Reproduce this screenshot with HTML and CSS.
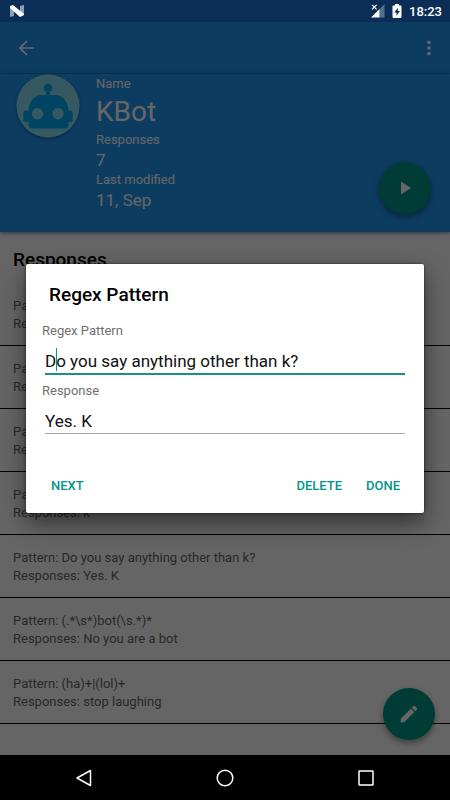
FILE: index.html
```html
<!DOCTYPE html>
<html lang="en">
<head>
<meta charset="utf-8">
<meta name="viewport" content="width=device-width, initial-scale=1">
<title>KBot</title>
<link rel="stylesheet" href="styles.css">
</head>
<body>
<div class="screen">
  <div class="status">
    <svg class="status-logo" width="16" height="12" viewBox="0 0 16 12" aria-hidden="true">
      <path d="M1 1h4v10l-4 1zM11 1l4-1v10l-4 1z" fill="#8d9db3"/>
      <path d="M1 1l3-1 11 9v1l-4 2L1 3z" fill="#fff"/>
    </svg>
    <div class="status-right">
      <svg width="14" height="14" viewBox="0 0 14 14" aria-hidden="true">
        <path d="M13.500 0v13.500H8.500V5z" fill="#54708f"/>
        <path d="M8.500 5v8.500H0z" fill="#fff"/>
        <path d="M1 .8l4.600 4.600M5.600 .8L1 5.400" stroke="#fff" stroke-width="1.200"/>
      </svg>
      <svg width="10" height="14" viewBox="0 0 10 14" aria-hidden="true">
        <path d="M3 0h4v1.500h1.500q1 0 1 1v10.500q0 1-1 1h-7q-1 0-1-1V2.500q0-1 1-1H3z" fill="#fff"/>
        <path d="M5.800 3.800L2.300 8.500h2.200v3.200L7.900 7H5.800z" fill="#0a2e55"/>
      </svg>
      <span class="clock">18:23</span>
    </div>
  </div>

  <div class="app">
    <header class="toolbar">
      <button class="icon-btn" aria-label="Back">
        <svg width="16" height="16" viewBox="0 0 16 16"><path d="M15 8H1.500M8 1L1 8l7 7" fill="none" stroke="currentColor" stroke-width="1.600"/></svg>
      </button>
      <button class="icon-btn" aria-label="More options">
        <svg width="4" height="16" viewBox="0 0 4 16"><g fill="currentColor"><circle cx="2" cy="2.500" r="1.800"/><circle cx="2" cy="8" r="1.800"/><circle cx="2" cy="13.500" r="1.800"/></g></svg>
      </button>
    </header>
    <section class="profile">
      <svg class="avatar" width="64" height="64" viewBox="0 0 64 64" aria-hidden="true">
        <circle cx="32" cy="32" r="31.500" fill="#84dcf2"/>
        <g fill="#03a9f4">
          <circle cx="32" cy="14" r="4.400"/>
          <path d="M30.300 16h3.400v6h-3.400z"/>
          <path d="M12.500 38C12.500 28 18 21 26 21h13c8 0 13.500 7 13.500 17z"/>
          <rect x="7.300" y="36.500" width="49.400" height="11.500" rx="2.500"/>
          <path d="M12.500 38h40v12.500q0 4-4 4h-32q-4 0-4-4z"/>
        </g>
        <g fill="#84dcf2"><circle cx="21.500" cy="39.700" r="5.700"/><circle cx="42" cy="39.700" r="5.700"/></g>
      </svg>
      <dl class="facts">
        <dt>Name</dt><dd class="name">KBot</dd>
        <dt>Responses</dt><dd>7</dd>
        <dt>Last modified</dt><dd>11, Sep</dd>
      </dl>
      <button class="fab fab-play" aria-label="Play">
        <svg width="12" height="14" viewBox="0 0 12 14"><path d="M2 .5l10 6.500-10 6.500z" fill="currentColor"/></svg>
      </button>
    </section>
    <main class="responses">
      <h1>Responses</h1>
      <ul>
        <li>Pattern: (hi)+<br>Responses: k</li>
        <li>Pattern: (hey)+<br>Responses: k</li>
        <li>Pattern: (yo)+<br>Responses: k</li>
        <li>Pattern: (.*)<br>Responses: k</li>
        <li>Pattern: Do you say anything other than k?<br>Responses: Yes. K</li>
        <li>Pattern: (.*\s*)bot(\s.*)*<br>Responses: No you are a bot</li>
        <li>Pattern: (ha)+|(lol)+<br>Responses: stop laughing</li>
      </ul>
    </main>
    <button class="fab fab-edit" aria-label="Edit">
      <svg width="22" height="22" viewBox="0 0 24 24"><path d="M3 17.250V21h3.750L17.810 9.940l-3.750-3.750zM20.710 7.040a1 1 0 0 0 0-1.410l-2.340-2.340a1 1 0 0 0-1.410 0l-1.830 1.830 3.750 3.750z" fill="currentColor"/></svg>
    </button>

    <div class="scrim">
      <form class="dialog" role="dialog" aria-labelledby="dialog-title">
        <h2 id="dialog-title">Regex Pattern</h2>
        <label for="pattern">Regex Pattern</label>
        <div class="field active">
          <input id="pattern" type="text" value="Do you say anything other than k?">
          <span class="caret"></span>
        </div>
        <label for="response">Response</label>
        <div class="field">
          <input id="response" type="text" value="Yes. K">
        </div>
        <div class="actions">
          <button type="button">NEXT</button>
          <button type="button" class="push">DELETE</button>
          <button type="button">DONE</button>
        </div>
      </form>
    </div>
  </div>

  <nav class="navbar">
    <button aria-label="Back"><svg width="18" height="18" viewBox="0 0 18 18"><path d="M15.500 1.500v15L2 9z"/></svg></button>
    <button aria-label="Home"><svg width="18" height="18" viewBox="0 0 18 18"><circle cx="9" cy="9" r="7.800"/></svg></button>
    <button aria-label="Overview"><svg width="18" height="18" viewBox="0 0 18 18"><rect x="2" y="2" width="14" height="14" rx=".5"/></svg></button>
  </nav>
</div>
</body>
</html>
```
FILE: styles.css
```css
* { box-sizing: border-box; }

body {
  margin: 0;
  font-family: Roboto, "Liberation Sans", sans-serif;
}

button {
  border: 0;
  padding: 0;
  background: none;
  font: inherit;
  color: inherit;
}

svg { display: block; }

.screen {
  display: flex;
  flex-direction: column;
  height: 100vh;
}

.status {
  display: flex;
  align-items: center;
  justify-content: space-between;
  height: 22px;
  padding: 0 8px 0 9px;
  background: #0a2e55;
  color: #fff;
}

.status-right {
  display: flex;
  align-items: center;
  gap: 7px;
}

.clock {
  font-size: 13px;
  font-weight: 500;
}

.app {
  position: relative;
  flex: 1;
  overflow: hidden;
  background: #fcfcfc;
}

.toolbar {
  display: flex;
  align-items: center;
  justify-content: space-between;
  height: 52px;
  padding: 0 19px;
  background: #2196f3;
  border-bottom: 1px solid #1d8ae2;
  color: #fff;
}

.profile {
  position: relative;
  display: flex;
  align-items: flex-start;
  gap: 16px;
  height: 158px;
  padding: 0 16px;
  background: #2196f3;
  box-shadow: 0 1px 4px rgba(0, 0, 0, .5);
  color: #fff;
}

.avatar {
  border-radius: 50%;
  box-shadow: 0 1px 2px rgba(0, 0, 0, .4);
}

.facts { margin: 0; }

.facts dt {
  font-size: 13px;
  line-height: 20px;
}

.facts dd {
  margin: 0;
  font-size: 17px;
  line-height: 20px;
}

.facts .name {
  font-size: 28px;
  line-height: 36px;
}

.fab {
  position: absolute;
  display: grid;
  place-items: center;
  width: 52px;
  height: 52px;
  border-radius: 50%;
  background: #009688;
  box-shadow: 0 3px 6px rgba(0, 0, 0, .4);
  color: #fff;
}

.fab-play { right: 19px; bottom: 18px; }
.fab-edit { right: 15px; bottom: 15px; }

.responses h1 {
  margin: 0;
  padding: 16px 13px 11px;
  font-size: 19px;
  font-weight: 500;
  line-height: 24px;
}

.responses ul {
  margin: 0;
  padding: 0;
  list-style: none;
}

.responses li {
  padding: 14px 13px 12px;
  border-bottom: 1px solid #000;
  font-size: 13px;
  line-height: 18px;
  color: #686868;
}

.scrim {
  position: absolute;
  inset: 0;
  display: flex;
  align-items: center;
  padding: 0 26px;
  background: rgba(0, 0, 0, .6);
}

.dialog {
  flex: 1;
  padding: 20px 16px 11px;
  border-radius: 2px;
  background: #fff;
  box-shadow: 0 10px 22px rgba(0, 0, 0, .5), 0 0 3px rgba(0, 0, 0, .6);
}

.dialog h2 {
  margin: 0 0 16px;
  padding-left: 7px;
  font-size: 19px;
  font-weight: 500;
  line-height: 22px;
}

.dialog label {
  display: block;
  font-size: 13px;
  line-height: 18px;
  color: #707070;
}

.field {
  position: relative;
  margin: 0 3px 7px;
  padding-top: 8px;
  border-bottom: 1px solid #a8a8a8;
}

.field.active {
  border-bottom: 2px solid #1b9184;
}

.field input {
  display: block;
  width: 100%;
  height: 25px;
  border: 0;
  padding: 0;
  outline: 0;
  background: none;
  font: 17px Roboto, "Liberation Sans", sans-serif;
  color: #111;
}

.caret {
  position: absolute;
  left: 11px;
  bottom: 2px;
  width: 1px;
  height: 23px;
  background: #009688;
}

.actions {
  display: flex;
  gap: 8px;
  padding: 27px 0 0 1px;
}

.actions button {
  height: 34px;
  padding: 0 8px;
  font-size: 13px;
  font-weight: 500;
  color: #009688;
}

.actions .push { margin-left: auto; }

.navbar {
  display: flex;
  justify-content: center;
  gap: 53px;
  height: 45px;
  background: #000;
}

.navbar button {
  display: grid;
  place-items: center;
  width: 88px;
}

.navbar svg {
  fill: none;
  stroke: #fff;
  stroke-width: 1.500;
  stroke-linejoin: round;
}
```
